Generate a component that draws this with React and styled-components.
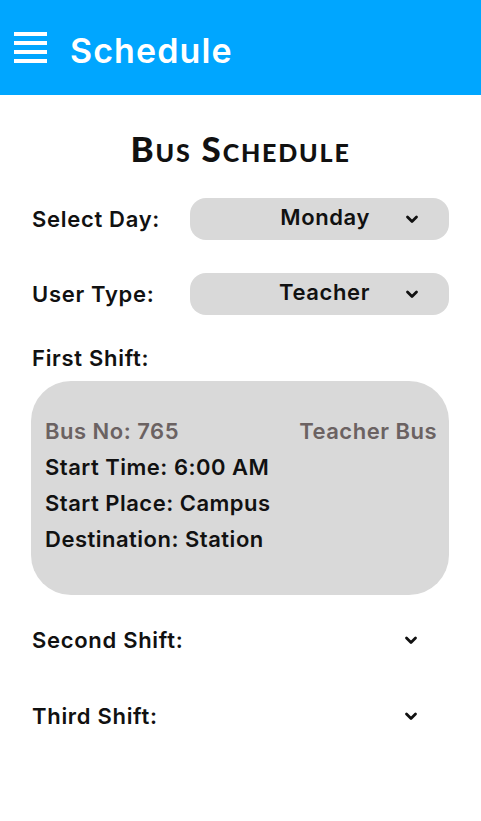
import styled, { createGlobalStyle } from "styled-components";

const Global = createGlobalStyle`
  body {
    margin: 0;
    background: #fff;
    font-family: "Inter", "Open Sans", sans-serif;
  }
`;

const Chevron = ({ size = 16 }) => (
  <svg width={size} height={size} viewBox="0 0 16 16">
    <path
      d="M3.5 6l4.5 4.5L12.5 6"
      fill="none"
      stroke="#111"
      strokeWidth="2.8"
      strokeLinecap="round"
      strokeLinejoin="round"
    />
  </svg>
);

const App = () => {
  return (
    <Page>
      <Global />
      <Header>
        <Burger>
          <span />
          <span />
          <span />
          <span />
        </Burger>
        <HeaderTitle>Schedule</HeaderTitle>
      </Header>
      <Content>
        <Title>Bus Schedule</Title>
        <FieldRow>
          <Label>Select Day:</Label>
          <Select>
            <span>Monday</span>
            <Chevron />
          </Select>
        </FieldRow>
        <FieldRow>
          <Label>User Type:</Label>
          <Select>
            <span>Teacher</span>
            <Chevron />
          </Select>
        </FieldRow>
        <ShiftLabel>First Shift:</ShiftLabel>
        <Card>
          <CardTop>
            <span>Bus No: 765</span>
            <span>Teacher Bus</span>
          </CardTop>
          <CardLine>Start Time: 6:00 AM</CardLine>
          <CardLine>Start Place: Campus</CardLine>
          <CardLine>Destination: Station</CardLine>
        </Card>
        <ShiftRow>
          <Label>Second Shift:</Label>
          <Chevron />
        </ShiftRow>
        <ShiftRow>
          <Label>Third Shift:</Label>
          <Chevron />
        </ShiftRow>
      </Content>
    </Page>
  );
};

const Page = styled.div`
  width: 481px;
  min-height: 821px;
  background: #fff;
`;
const Header = styled.div`
  height: 95px;
  background: #00a6ff;
  display: flex;
  align-items: center;
  padding-left: 14px;
  gap: 23px;
  box-sizing: border-box;
`;
const Burger = styled.div`
  width: 33px;
  display: flex;
  flex-direction: column;
  gap: 4.7px;
  span {
    display: block;
    height: 4px;
    background: #fff;
  }
`;
const HeaderTitle = styled.div`
  color: #fff;
  font-size: 34px;
  font-weight: 600;
  letter-spacing: 1.1px;
  margin-top: 6px;
`;
const Content = styled.div`
  padding: 0 32px;
  display: flex;
  flex-direction: column;
`;
const Title = styled.h1`
  margin: 35px 0 0;
  text-align: center;
  font-family: "Lato", sans-serif;
  font-weight: 900;
  font-variant: small-caps;
  font-size: 35px;
  letter-spacing: 1.8px;
  color: #111;
  line-height: 36px;
`;
const FieldRow = styled.div`
  display: flex;
  align-items: center;
  margin-top: 32px;
  & + & {
    margin-top: 33px;
  }
`;
const Label = styled.div`
  font-size: 22px;
  font-weight: 600;
  color: #111;
  width: 158px;
  letter-spacing: 0.7px;
`;
const Select = styled.div`
  width: 259px;
  height: 42px;
  border-radius: 16px;
  background: #d9d9d9;
  display: flex;
  align-items: center;
  justify-content: flex-end;
  gap: 34px;
  padding: 0 29px 0 0;
  box-sizing: border-box;
  font-size: 22px;
  font-weight: 600;
  letter-spacing: 0.6px;
  color: #111;
  span {
    margin-top: -5px;
  }
`;
const ShiftLabel = styled(Label)`
  margin-top: 30px;
  width: auto;
`;
const Card = styled.div`
  margin: 10px 0 0 -1px;
  height: 214px;
  border-radius: 40px;
  background: #d9d9d9;
  padding: 32px 12px 0 14px;
  box-sizing: border-box;
  font-size: 22px;
  font-weight: 600;
  letter-spacing: 0.5px;
`;
const CardTop = styled.div`
  display: flex;
  justify-content: space-between;
  color: #6b6262;
  line-height: 36px;
`;
const CardLine = styled.div`
  color: #111;
  line-height: 36px;
`;
const ShiftRow = styled.div`
  display: flex;
  align-items: center;
  justify-content: space-between;
  padding-right: 30px;
  margin-top: 32px;
  & + & {
    margin-top: 50px;
  }
`;

export default App;
